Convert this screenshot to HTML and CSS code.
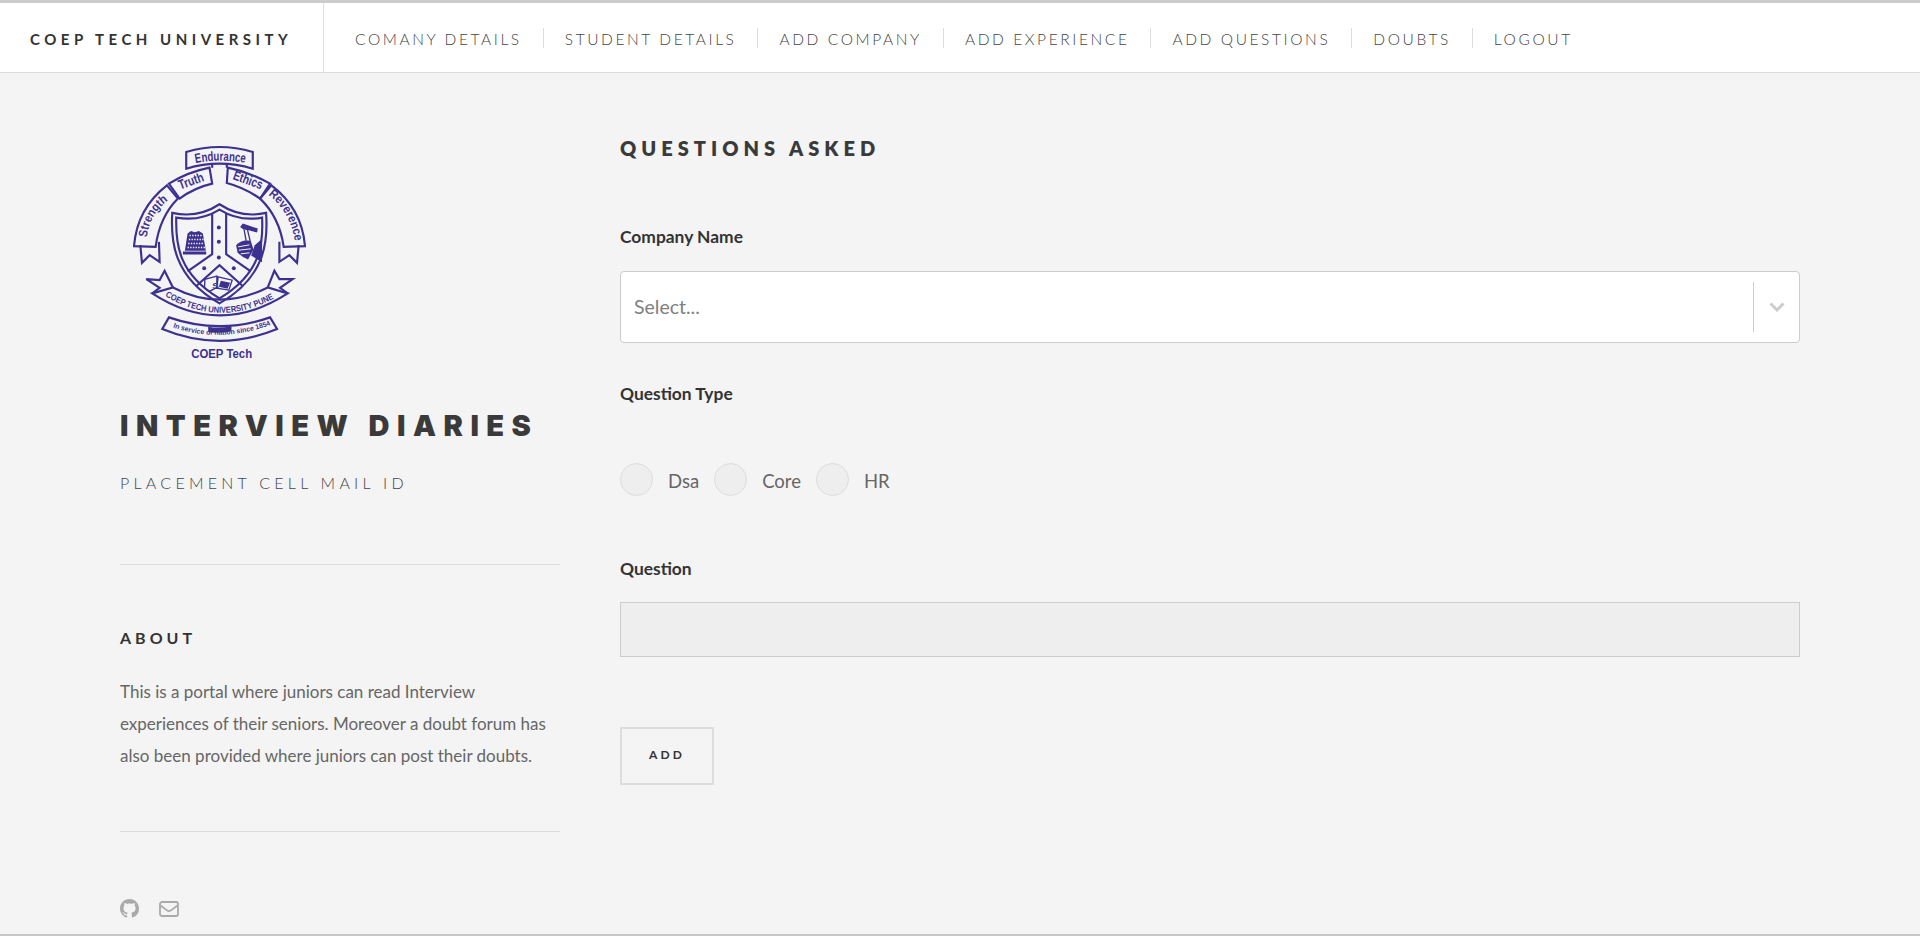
FILE: index.html
```html
<!DOCTYPE html>
<html lang="en">
<head>
<meta charset="utf-8">
<title>Interview Diaries</title>
<link rel="stylesheet" href="styles.css">
</head>
<body>
<header class="topbar">
  <a class="brand" href="#">COEP TECH UNIVERSITY</a>
  <nav class="nav">
    <a href="#">COMANY DETAILS</a>
    <a href="#">STUDENT DETAILS</a>
    <a href="#">ADD COMPANY</a>
    <a href="#">ADD EXPERIENCE</a>
    <a href="#">ADD QUESTIONS</a>
    <a href="#">DOUBTS</a>
    <a href="#">LOGOUT</a>
  </nav>
</header>
<div class="page">
  <aside class="side">
    <svg class="logo" viewBox="70 44 520 646" aria-label="COEP Tech logo">
      <defs>
        <path id="arcT" d="M258 98 Q330 84 408 98"/>
        <path id="arcL" d="M112 322 Q120 248 182 206"/>
        <path id="arcR" d="M476 194 Q542 242 558 338"/>
        <path id="arcU" d="M166 498 Q330 596 497 503"/>
        <path id="arcS" d="M190 592 Q330 640 480 586"/>
      </defs>
      <g class="lg-line">
        <path d="M230 65 Q330 35 430 65 L430 115 Q330 85 230 115 Z"/>
        <path d="M178 160 Q235 125 300 112 L308 160 Q255 172 210 205 Z"/>
        <path d="M355 112 Q420 125 482 160 L452 205 Q405 172 352 158 Z"/>
        <path d="M172 165 Q82 235 73 348 L138 350 Q150 260 205 205 Z"/>
        <path d="M486 165 Q578 235 587 348 L523 350 Q510 260 452 205 Z"/>
        <path d="M92 345 L97 398 L120 375 L150 395 L148 335"/>
        <path d="M568 345 L563 398 L540 375 L510 395 L510 335"/>
        <path d="M308 112 V98 M352 112 V98"/>
        <path d="M188 248 Q265 265 330 222 Q395 265 470 248 C476 330 470 440 330 520 C190 440 183 330 188 248 Z"/>
        <path d="M200 262 Q270 275 330 238 Q390 275 458 262 C462 340 455 430 330 505 C205 430 198 340 200 262 Z"/>
        <path d="M308 250 V372 L234 424 M350 250 V372 L424 424"/>
        <path d="M262 466 L330 405 L398 466"/>
        <path d="M128 490 Q330 622 535 490 L475 472 Q330 545 190 472 Z"/>
        <path d="M128 490 L150 473 L110 447 L150 450 L165 422 L190 472"/>
        <path d="M535 490 L512 473 L550 447 L510 447 L495 422 L475 472"/>
        <path d="M178 562 Q330 615 482 562 L503 597 Q330 668 158 597 Z"/>
        <path class="thin" d="M286 448 L322 438 L322 472 L300 484 L285 474 Z M326 440 L368 450 L358 480 L322 474 Z"/>
        <path class="thin" d="M404 298 L410 332 M414 298 L422 332"/>
      </g>
      <g class="lg-fill">
        <circle cx="328" cy="292" r="6"/><circle cx="328" cy="335" r="6"/><circle cx="328" cy="382" r="6"/>
        <circle cx="284" cy="414" r="6"/><circle cx="373" cy="414" r="6"/>
        <path d="M234 310 L244 302 L256 306 L268 302 L280 310 L289 362 L226 362 Z"/>
        <rect x="220" y="364" width="70" height="9"/>
        <path d="M392 290 L400 280 L445 295 L443 307 L418 300 L402 298 Z"/>
        <path d="M380 345 Q395 327 424 332 L432 358 L416 388 Q395 380 384 366 Z"/>
        <path d="M458 326 L458 396 L425 376 L436 345 Z"/>
        <path d="M296 590 Q330 596 366 588 L366 604 Q330 612 296 606 Z"/>
        <path d="M334 452 L362 458 L354 476 L328 470 Z"/>
      </g>
      <g class="lg-dots">
        <path d="M240 316 H278 M238 328 H282 M236 340 H284 M234 352 H286"/>
      </g>
      <g class="lg-cuts">
        <path d="M386 350 L420 344 M388 360 L424 356 M394 371 L420 368"/>
      </g>
      <g class="lg-text">
        <text class="t34"><textPath href="#arcT" textLength="150" lengthAdjust="spacingAndGlyphs">Endurance</textPath></text>
        <text transform="translate(212 178) rotate(-20)" textLength="78" lengthAdjust="spacingAndGlyphs" class="t34">Truth</text>
        <text transform="translate(368 146) rotate(20)" textLength="92" lengthAdjust="spacingAndGlyphs" class="t34">Ethics</text>
        <text class="t30"><textPath href="#arcL" textLength="132" lengthAdjust="spacingAndGlyphs">Strength</textPath></text>
        <text class="t30"><textPath href="#arcR" textLength="165" lengthAdjust="spacingAndGlyphs">Reverence</textPath></text>
        <text class="t22"><textPath href="#arcU" textLength="345" lengthAdjust="spacingAndGlyphs">COEP TECH UNIVERSITY PUNE</textPath></text>
        <text class="t17"><textPath href="#arcS" textLength="300" lengthAdjust="spacingAndGlyphs">In service of nation since 1854</textPath></text>
        <text class="t18" x="308" y="478">S</text>
        <text x="245" y="685" textLength="183" lengthAdjust="spacingAndGlyphs" class="t38">COEP Tech</text>
      </g>
    </svg>
    <h1 class="title">INTERVIEW DIARIES</h1>
    <p class="subtitle">PLACEMENT CELL MAIL ID</p>
    <hr class="rule rule-a">
    <h4 class="about-h">ABOUT</h4>
    <p class="about-p">This is a portal where juniors can read Interview<br>experiences of their seniors. Moreover a doubt forum has<br>also been provided where juniors can post their doubts.</p>
    <hr class="rule rule-b">
    <div class="socials">
      <a href="#" aria-label="GitHub"><svg class="ic-gh" viewBox="0 0 16 16"><path d="M8 0C3.58 0 0 3.58 0 8c0 3.54 2.29 6.53 5.47 7.59.4.07.55-.17.55-.38 0-.19-.01-.82-.01-1.49-2.01.37-2.53-.49-2.69-.94-.09-.23-.48-.94-.82-1.13-.28-.15-.68-.52-.01-.53.63-.01 1.08.58 1.23.82.72 1.21 1.87.87 2.33.66.07-.52.28-.87.51-1.07-1.78-.2-3.64-.89-3.64-3.95 0-.87.31-1.59.82-2.15-.08-.2-.36-1.02.08-2.12 0 0 .67-.21 2.2.82.64-.18 1.32-.27 2-.27.68 0 1.36.09 2 .27 1.53-1.04 2.2-.82 2.2-.82.44 1.1.16 1.92.08 2.12.51.56.82 1.27.82 2.15 0 3.07-1.87 3.75-3.65 3.95.29.25.54.73.54 1.48 0 1.07-.01 1.93-.01 2.2 0 .21.15.46.55.38A8.013 8.013 0 0016 8c0-4.42-3.58-8-8-8z"/></svg></a>
      <a href="#" aria-label="Mail"><svg class="ic-mail" viewBox="0 0 20 16"><rect x="1" y="1" width="18" height="14" rx="2"/><path d="M1.5 4.5 L8.4 9.6 Q10 10.7 11.6 9.6 L18.5 4.5"/></svg></a>
    </div>
  </aside>
  <main class="main">
    <h2 class="heading">QUESTIONS ASKED</h2>
    <label class="label lb-company">Company Name</label>
    <div class="select">
      <span class="placeholder">Select...</span>
      <span class="sel-sep"></span>
      <span class="sel-arrow"><svg viewBox="0 0 20 20"><path d="M3.5 6.5 L10 13 L16.5 6.5"/></svg></span>
    </div>
    <label class="label lb-type">Question Type</label>
    <div class="radios">
      <input type="radio" name="q" id="r1"><label for="r1">Dsa</label>
      <input type="radio" name="q" id="r2"><label for="r2">Core</label>
      <input type="radio" name="q" id="r3"><label for="r3">HR</label>
    </div>
    <label class="label lb-question" for="q">Question</label>
    <input class="text" id="q" type="text">
    <button class="btn" type="button">ADD</button>
  </main>
</div>
</body>
</html>
```
FILE: styles.css
```css
* { box-sizing: border-box; }
html, body { margin: 0; height: 100%; }
body {
  background: #f4f4f4;
  color: #666;
  font-family: Lato, "Open Sans", sans-serif;
  height: 936px;
  overflow: hidden;
  border-bottom: 2px solid #c8c8c8;
}
a { text-decoration: none; color: inherit; }

.topbar {
  display: flex;
  height: 73px;
  background: #fff;
  border-top: 3px solid #ccc;
  border-bottom: 1px solid #ddd;
}
.brand {
  width: 324px;
  padding-left: 30px;
  border-right: 1px solid #ddd;
  font-size: 15px;
  font-weight: 700;
  letter-spacing: 4.5px;
  color: #333;
  line-height: 72px;
  white-space: nowrap;
}
.nav { display: flex; align-items: center; padding-left: 10px; }
.nav a {
  padding: 0 21px;
  height: 20px;
  line-height: 23px;
  font-size: 15.5px;
  font-weight: 300;
  letter-spacing: 2.6px;
  color: #444;
  border-right: 1px solid #ddd;
  white-space: nowrap;
}
.nav a:last-child { border-right: 0; }

.page {
  display: grid;
  grid-template-columns: 440px 1180px;
  column-gap: 60px;
  padding: 0 120px;
}

.logo { display: block; width: 173px; height: 215px; margin: 72px 0 0 13px; }
.lg-line path { fill: none; stroke: #3d3190; stroke-width: 6.5; stroke-linejoin: miter; }
.lg-line path.thin { stroke-width: 4; }
.lg-fill { fill: #3d3190; }
.lg-dots path { fill: none; stroke: #f4f4f4; stroke-width: 4; stroke-dasharray: 4 4; }
.lg-cuts path { fill: none; stroke: #f4f4f4; stroke-width: 3; }
.lg-text { fill: #3d3190; font-family: "Liberation Sans", sans-serif; font-weight: 700; }
.t34 { font-size: 40px; }
.t30 { font-size: 37px; }
.t22 { font-size: 26px; }
.t17 { font-size: 21px; }
.t18 { font-size: 30px; }
.t38 { font-size: 38px; }

.title {
  margin: 51px 0 0;
  font-family: Inter, Lato, sans-serif;
  font-size: 29px;
  line-height: 30px;
  font-weight: 900;
  letter-spacing: 7.5px;
  color: #3a3a3a;
  white-space: nowrap;
}
.subtitle {
  margin: 32px 0 0;
  font-size: 16px;
  line-height: 20px;
  font-weight: 300;
  letter-spacing: 4.25px;
  color: #444;
  white-space: nowrap;
}
.rule { border: 0; border-top: 1px solid #ddd; margin: 0; }
.rule-a { margin-top: 71px; }
.rule-b { margin-top: 59px; }
.about-h {
  margin: 63px 0 0;
  font-size: 16px;
  line-height: 20px;
  font-weight: 700;
  letter-spacing: 4px;
  color: #333;
}
.about-p {
  margin: 28px 0 0;
  font-size: 17px;
  line-height: 32px;
  color: #666;
  white-space: nowrap;
}
.socials { display: flex; margin-top: 67px; gap: 20px; align-items: center; }
.socials a { display: block; height: 19px; }
.ic-gh { display: block; width: 19px; height: 19px; fill: #aaa; }
.ic-mail { display: block; width: 20px; height: 16px; margin-top: 2px; fill: none; stroke: #aaa; stroke-width: 1.8; }

.heading {
  margin: 63px 0 0;
  font-size: 20px;
  line-height: 24px;
  font-weight: 800;
  letter-spacing: 5px;
  color: #3a3a3a;
}
.label {
  display: block;
  font-size: 17.4px;
  line-height: 24px;
  font-weight: 700;
  color: #333;
}
.lb-company { margin-top: 65px; }
.lb-type { margin-top: 39px; }
.lb-question { margin-top: 61px; }

.select {
  display: flex;
  align-items: center;
  height: 72px;
  margin-top: 22px;
  padding-left: 13px;
  background: #fff;
  border: 1px solid #ccc;
  border-radius: 4px;
}
.placeholder { flex: 1; font-size: 19.5px; line-height: 24px; color: #808080; }
.sel-sep { width: 1px; height: 50px; background: #ccc; }
.sel-arrow { width: 45px; display: flex; justify-content: center; }
.sel-arrow svg { width: 20px; height: 20px; fill: none; stroke: #ccc; stroke-width: 3; }

.radios {
  display: flex;
  align-items: center;
  margin-top: 57px;
  height: 33px;
  font-size: 18.5px;
  color: #666;
}
.radios input {
  appearance: none;
  flex: none;
  width: 33px;
  height: 33px;
  margin: 0 15px 0 0;
  background: #eee;
  border: 1px solid #ddd;
  border-radius: 50%;
}
.radios label { margin-right: 15px; padding-top: 2px; }

.text {
  display: block;
  width: 100%;
  height: 55px;
  margin-top: 21px;
  background: #eee;
  border: 1px solid #ccc;
  padding: 0 12px;
}
.btn {
  display: block;
  width: 94px;
  height: 58px;
  margin-top: 70px;
  background: transparent;
  border: 2px solid #ddd;
  font-family: Lato, sans-serif;
  font-size: 12px;
  font-weight: 700;
  letter-spacing: 3.2px;
  color: #333;
  padding: 0 0 3px;
}
```
